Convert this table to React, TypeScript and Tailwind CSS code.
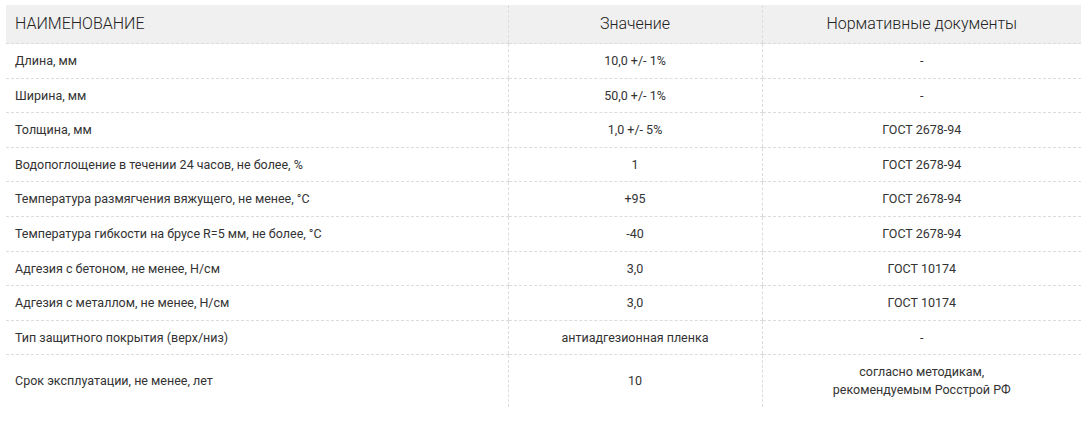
import React from "react";

interface Row {
  name: string;
  value: string;
  docs: React.ReactNode;
}

const rows: Row[] = [
  { name: "Длина, мм", value: "10,0 +/- 1%", docs: "-" },
  { name: "Ширина, мм", value: "50,0 +/- 1%", docs: "-" },
  { name: "Толщина, мм", value: "1,0 +/- 5%", docs: "ГОСТ 2678-94" },
  { name: "Водопоглощение в течении 24 часов, не более, %", value: "1", docs: "ГОСТ 2678-94" },
  { name: "Температура размягчения вяжущего, не менее, °С", value: "+95", docs: "ГОСТ 2678-94" },
  { name: "Температура гибкости на брусе R=5 мм, не более, °С", value: "-40", docs: "ГОСТ 2678-94" },
  { name: "Адгезия с бетоном, не менее, Н/см", value: "3,0", docs: "ГОСТ 10174" },
  { name: "Адгезия с металлом, не менее, Н/см", value: "3,0", docs: "ГОСТ 10174" },
  { name: "Тип защитного покрытия (верх/низ)", value: "антиадгезионная пленка", docs: "-" },
  {
    name: "Срок эксплуатации, не менее, лет",
    value: "10",
    docs: (
      <>
        согласно методикам,
        <br />
        рекомендуемым Росстрой РФ
      </>
    ),
  },
];

export default function App() {
  return (
    <div className="bg-white min-h-[439px] pt-[5px] pl-[6px] font-['Roboto',sans-serif]">
      <table className="w-[1075px] border-collapse table-fixed">
        <colgroup>
          <col className="w-[502px]" />
          <col className="w-[254px]" />
          <col className="w-[319px]" />
        </colgroup>
        <thead>
          <tr className="bg-[#f0f0f0] text-[16px] font-light leading-[22px] text-[#222]">
            <th className="pt-[8px] pb-[8px] pl-[9px] text-left font-light border-b border-dashed border-[#dcdcdc]">
              НАИМЕНОВАНИЕ
            </th>
            <th className="pt-[8px] pb-[8px] text-center font-light border-b border-l border-dashed border-[#dcdcdc]">
              Значение
            </th>
            <th className="pt-[8px] pb-[8px] text-center font-light border-b border-l border-dashed border-[#dcdcdc]">
              Нормативные документы
            </th>
          </tr>
        </thead>
        <tbody className="text-[12.5px] leading-[17.6px] text-[#333]">
          {rows.map((row, i) => {
            const last = i === rows.length - 1;
            const rowBorder = last ? "" : "border-b";
            return (
              <tr key={i}>
                <td className={`py-2 pl-[9px] text-left border-dashed border-[#dcdcdc] ${rowBorder}`}>
                  {row.name}
                </td>
                <td className={`py-2 text-center border-l border-dashed border-[#dcdcdc] ${rowBorder}`}>
                  {row.value}
                </td>
                <td className={`py-2 text-center border-l border-dashed border-[#dcdcdc] ${rowBorder}`}>
                  {row.docs}
                </td>
              </tr>
            );
          })}
        </tbody>
      </table>
    </div>
  );
}
